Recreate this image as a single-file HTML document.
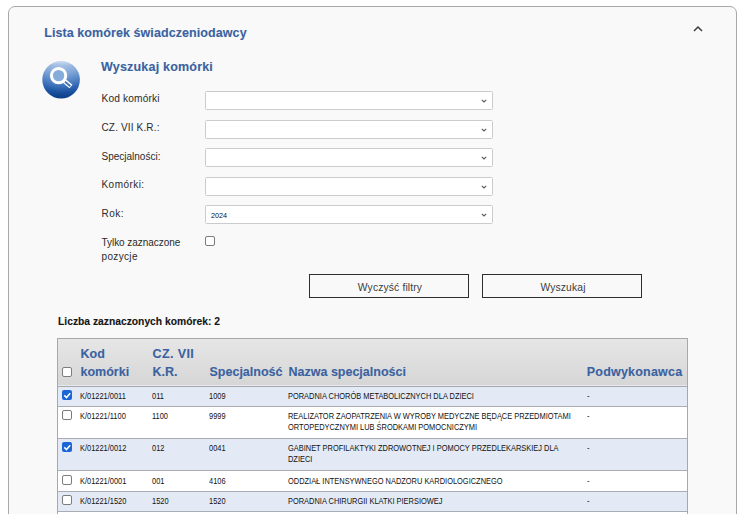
<!DOCTYPE html>
<html><head><meta charset="utf-8">
<style>
*{margin:0;padding:0;box-sizing:border-box}
html,body{width:744px;height:514px;overflow:hidden;background:#fff;font-family:"Liberation Sans",sans-serif}
.a{position:absolute;white-space:nowrap}
#panel{position:absolute;left:8px;top:6px;width:729px;height:540px;border:1px solid #a8a8a8;border-radius:7px;background:#f9f9f9}
.t{color:#3a62a0;font-weight:bold;font-size:12.5px;line-height:12.5px;letter-spacing:0.08px;-webkit-text-stroke:0.1px #3a62a0}
.lbl{color:#2b2b2b;font-size:10px;line-height:10px}
.sel{position:absolute;left:205px;width:288px;height:19px;border:1px solid #cbcbcb;border-radius:1.5px;background:#fff}
.sel svg{position:absolute;right:5.5px;top:6.6px}
.btn{position:absolute;top:274px;width:160px;height:24px;border:1px solid #2e2e2e;background:#f9f9f9;color:#3c3c3c;font-size:10.3px;line-height:23px;padding-top:1px;padding-left:2px;letter-spacing:0.15px;text-align:center}
.cb{position:absolute;width:10px;height:10px;border:1px solid #7c7c7c;border-radius:2px;background:#fff}
.cbk{position:absolute;width:10px;height:10px;border-radius:2px;background:#1a66d6}
.cbk svg{display:block}
.row{position:absolute;left:58px;width:629px;border-bottom:1px solid #a9acb3}
.odd{background:#e3eaf6}
.even{background:#fff}
.c{position:absolute;color:#111;font-size:8px;line-height:10.85px;white-space:nowrap;transform:scale(0.93,1.08);transform-origin:0 0}
.hd{position:absolute;color:#3a62a0;-webkit-text-stroke:0.1px #3a62a0;font-weight:bold;font-size:12.5px;line-height:18px;white-space:nowrap}
</style></head><body>
<div id="panel"></div>

<div class="a t" style="left:44.2px;top:27.4px">Lista komórek świadczeniodawcy</div>
<svg class="a" style="left:693px;top:25px" width="10" height="8" viewBox="0 0 10 8"><path d="M1 6 L5 2 L9 6" fill="none" stroke="#3c3c3c" stroke-width="1.5"/></svg>

<svg class="a" style="left:40px;top:59px" width="42" height="42" viewBox="0 0 42 42">
<defs>
<linearGradient id="g1" x1="0" y1="0" x2="0" y2="1">
<stop offset="0" stop-color="#c4d6ee"/>
<stop offset="0.12" stop-color="#8fb0dc"/>
<stop offset="0.45" stop-color="#4f82c6"/>
<stop offset="0.75" stop-color="#225aa8"/>
<stop offset="1" stop-color="#0b3c86"/>
</linearGradient>
<radialGradient id="g2" cx="0.5" cy="0.25" r="0.6">
<stop offset="0" stop-color="#ffffff" stop-opacity="0.25"/>
<stop offset="1" stop-color="#ffffff" stop-opacity="0"/>
</radialGradient>
</defs>
<circle cx="21.1" cy="20.8" r="18.8" fill="url(#g1)"/>
<circle cx="21.1" cy="20.8" r="18.8" fill="url(#g2)"/>
<circle cx="18.6" cy="16.6" r="7.2" fill="#86acdc" stroke="#fff" stroke-width="3"/>
<path d="M24.3 22.0 L31.0 27.6" stroke="#fff" stroke-width="4.6" stroke-linecap="butt"/>
<path d="M25.0 22.8 L30.4 27.2" stroke="#3d71b8" stroke-width="1.8"/>
</svg>

<div class="a t" style="left:101px;top:61.1px;letter-spacing:0.2px">Wyszukaj komórki</div>

<div class="a lbl" style="left:101.5px;top:93.9px;font-size:10.2px;letter-spacing:0.15px">Kod komórki</div>
<div class="a lbl" style="left:101.5px;top:122.8px;letter-spacing:0.15px">CZ. VII K.R.:</div>
<div class="a lbl" style="left:101.5px;top:151.9px">Specjalności:</div>
<div class="a lbl" style="left:101.5px;top:180.4px;letter-spacing:0.45px">Komórki:</div>
<div class="a lbl" style="left:101.5px;top:208.5px;letter-spacing:0.5px">Rok:</div>
<div class="a lbl" style="left:101.5px;top:237.5px;letter-spacing:-0.05px">Tylko zaznaczone</div>
<div class="a lbl" style="left:101.5px;top:252px;letter-spacing:0.35px">pozycje</div>

<div class="sel" style="top:91px"><svg width="6" height="4" viewBox="0 0 6 4"><path d="M0.8 0.8 L3 3 L5.2 0.8" fill="none" stroke="#5a5a5a" stroke-width="1.1"/></svg></div>
<div class="sel" style="top:120px"><svg width="6" height="4" viewBox="0 0 6 4"><path d="M0.8 0.8 L3 3 L5.2 0.8" fill="none" stroke="#5a5a5a" stroke-width="1.1"/></svg></div>
<div class="sel" style="top:148px"><svg width="6" height="4" viewBox="0 0 6 4"><path d="M0.8 0.8 L3 3 L5.2 0.8" fill="none" stroke="#5a5a5a" stroke-width="1.1"/></svg></div>
<div class="sel" style="top:177px"><svg width="6" height="4" viewBox="0 0 6 4"><path d="M0.8 0.8 L3 3 L5.2 0.8" fill="none" stroke="#5a5a5a" stroke-width="1.1"/></svg></div>
<div class="sel" style="top:205px"><svg width="6" height="4" viewBox="0 0 6 4"><path d="M0.8 0.8 L3 3 L5.2 0.8" fill="none" stroke="#5a5a5a" stroke-width="1.1"/></svg>
<div class="a" style="left:5.2px;top:5.7px;font-size:8px;line-height:8px;color:#111;transform:scaleX(0.9);transform-origin:0 0">2024</div></div>

<div class="cb" style="left:205px;top:236px"></div>

<div class="btn" style="left:309px">Wyczyść filtry</div>
<div class="btn" style="left:482px">Wyszukaj</div>

<div class="a" style="left:58px;top:317px;font-size:10.3px;line-height:10px;font-weight:bold;color:#141414;-webkit-text-stroke:0.1px #141414">Liczba zaznaczonych komórek: 2</div>

<!-- table -->
<div class="a" style="left:57px;top:338px;width:631px;height:190px;border:1px solid #a8a8a8;border-bottom:none;background:#fff"></div>
<div class="a" style="left:58px;top:339px;width:629px;height:48px;background:linear-gradient(#e6e6e6,#d6d6d6) 0 0/100% 46px no-repeat,#e8eaef;border-bottom:1px solid #a6a8b0"></div>
<div class="cb" style="left:62px;top:367px"></div>
<div class="hd" style="left:80.5px;top:345px">Kod<br>komórki</div>
<div class="hd" style="left:152.5px;top:345px"><span style="letter-spacing:0.4px">CZ. VII</span><br>K.R.</div>
<div class="hd" style="left:209.5px;top:363px">Specjalność</div>
<div class="hd" style="left:288.5px;top:363px">Nazwa specjalności</div>
<div class="hd" style="left:586.8px;top:363px;letter-spacing:0.2px">Podwykonawca</div>

<div class="row odd" style="top:387px;height:20px"></div>
<div class="row even" style="top:407px;height:32px"></div>
<div class="row odd" style="top:439px;height:32px"></div>
<div class="row even" style="top:471px;height:21px"></div>
<div class="row odd" style="top:492px;height:20px"></div>
<div class="row even" style="top:512px;height:20px"></div>

<div class="cbk" style="left:62px;top:390px"><svg width="10" height="10" viewBox="0 0 10 10"><path d="M2.3 5.4 L4.5 7.6 L8.2 3.2" fill="none" stroke="#fff" stroke-width="1.5"/></svg></div>
<div class="c" style="left:80.4px;top:391.2px">K/01221/0011</div>
<div class="c" style="left:152.3px;top:391.2px">011</div>
<div class="c" style="left:209.3px;top:391.2px">1009</div>
<div class="c" style="left:288.4px;top:391.2px">PORADNIA CHORÓB METABOLICZNYCH DLA DZIECI</div>
<div class="c" style="left:586.8px;top:391.2px">-</div>

<div class="cb" style="left:62px;top:410px"></div>
<div class="c" style="left:80.4px;top:411.2px">K/01221/1100</div>
<div class="c" style="left:152.3px;top:411.2px">1100</div>
<div class="c" style="left:209.3px;top:411.2px">9999</div>
<div class="c" style="left:288.4px;top:411.2px">REALIZATOR ZAOPATRZENIA W WYROBY MEDYCZNE BĘDĄCE PRZEDMIOTAMI<br>ORTOPEDYCZNYMI LUB ŚRODKAMI POMOCNICZYMI</div>
<div class="c" style="left:586.8px;top:411.2px">-</div>

<div class="cbk" style="left:62px;top:442px"><svg width="10" height="10" viewBox="0 0 10 10"><path d="M2.3 5.4 L4.5 7.6 L8.2 3.2" fill="none" stroke="#fff" stroke-width="1.5"/></svg></div>
<div class="c" style="left:80.4px;top:442.9px">K/01221/0012</div>
<div class="c" style="left:152.3px;top:442.9px">012</div>
<div class="c" style="left:209.3px;top:442.9px">0041</div>
<div class="c" style="left:288.4px;top:442.9px">GABINET PROFILAKTYKI ZDROWOTNEJ I POMOCY PRZEDLEKARSKIEJ DLA<br>DZIECI</div>
<div class="c" style="left:586.8px;top:442.9px">-</div>

<div class="cb" style="left:62px;top:475px"></div>
<div class="c" style="left:80.4px;top:476.2px">K/01221/0001</div>
<div class="c" style="left:152.3px;top:476.2px">001</div>
<div class="c" style="left:209.3px;top:476.2px">4106</div>
<div class="c" style="left:288.4px;top:476.2px">ODDZIAŁ INTENSYWNEGO NADZORU KARDIOLOGICZNEGO</div>
<div class="c" style="left:586.8px;top:476.2px">-</div>

<div class="cb" style="left:62px;top:495px"></div>
<div class="c" style="left:80.4px;top:496.2px">K/01221/1520</div>
<div class="c" style="left:152.3px;top:496.2px">1520</div>
<div class="c" style="left:209.3px;top:496.2px">1520</div>
<div class="c" style="left:288.4px;top:496.2px">PORADNIA CHIRURGII KLATKI PIERSIOWEJ</div>
<div class="c" style="left:586.8px;top:496.2px">-</div>

</body></html>
